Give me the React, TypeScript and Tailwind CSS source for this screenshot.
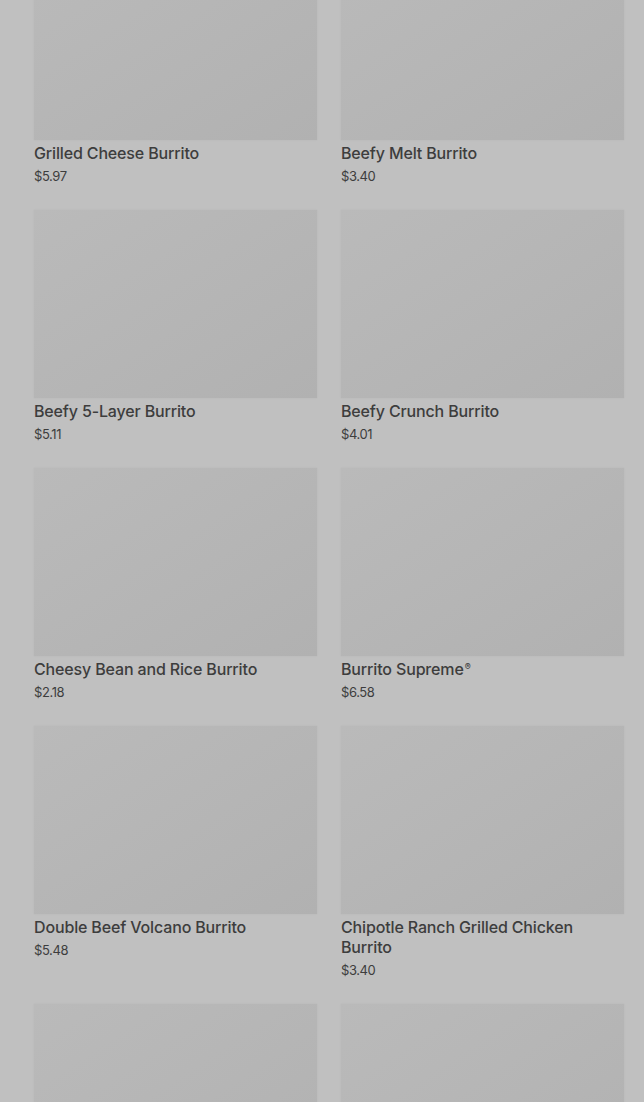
import React from "react";

type Item = {
  name: string;
  price: string;
};

const items: Item[] = [
  { name: "Grilled Cheese Burrito", price: "$5.97" },
  { name: "Beefy Melt Burrito", price: "$3.40" },
  { name: "Beefy 5-Layer Burrito", price: "$5.11" },
  { name: "Beefy Crunch Burrito", price: "$4.01" },
  { name: "Cheesy Bean and Rice Burrito", price: "$2.18" },
  { name: "Burrito Supreme", price: "$6.58" },
  { name: "Double Beef Volcano Burrito", price: "$5.48" },
  { name: "Chipotle Ranch Grilled Chicken Burrito", price: "$3.40" },
];

function Thumb() {
  return (
    <div className="h-[188px] w-full bg-gradient-to-br from-[#bababa] to-[#b1b1b1] shadow-[0_0_2px_rgba(0,0,0,0.06)]"></div>
  );
}

function ProductCard({ item }: { item: Item }) {
  return (
    <div className="flex flex-col">
      <Thumb />
      <div className="mt-[3px] text-base leading-5 font-medium tracking-[-0.15px] text-[#3d3d3d]">
        {item.name}
        {item.name == "Burrito Supreme" && (
          <span className="relative -top-[5px] ml-[1px] text-[9px] leading-none">®</span>
        )}
      </div>
      <div className="mt-[4px] text-[13px] leading-[18px] tracking-[-0.4px] text-[#3d3d3d]">
        {item.price}
      </div>
    </div>
  );
}

export default function App() {
  return (
    <div
      className="h-[1102px] w-[644px] overflow-hidden bg-[#c0c0c0]"
      style={{ fontFamily: "Inter, Roboto, 'Liberation Sans', sans-serif" }}
    >
      <div className="-mt-[48px] grid grid-cols-2 gap-x-6 gap-y-[25px] pl-[34px] pr-[20px]">
        {items.map((item) => (
          <ProductCard key={item.name} item={item} />
        ))}
        <Thumb />
        <Thumb />
      </div>
    </div>
  );
}
